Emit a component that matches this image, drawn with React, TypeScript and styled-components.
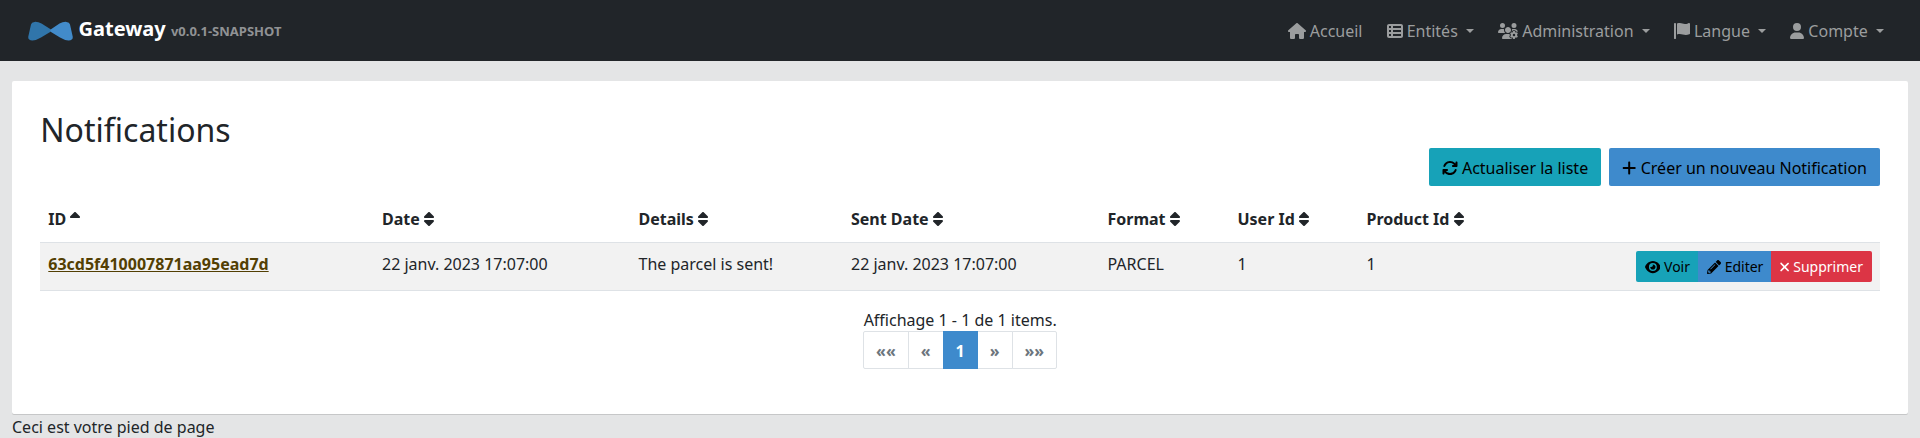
import React from "react";
import styled, { createGlobalStyle, css } from "styled-components";
import {
  FaArrowsRotate, FaEye, FaHouse, FaPlus, FaSort, FaSortUp,
  FaTableList, FaUser, FaUsersGear,
} from "react-icons/fa6";
import { FaPencilAlt } from "react-icons/fa";

const GlobalStyle = createGlobalStyle`
  *, *::before, *::after { box-sizing: border-box; }
  body {
    margin: 0;
    background: #e4e5e6;
    color: #212529;
    font: 400 16px/1.5 "Noto Sans", "Liberation Sans", sans-serif;
    overflow: hidden;
  }
`;

/* Icon box: 1em high, with the width of the glyph's own view box in em. */
const Icon = styled.span<{ $w?: number }>`
  display: inline-block;
  flex: none;
  width: ${(p) => p.$w ?? 1}em;
  height: 1em;
  line-height: 1;
  vertical-align: -0.125em;
  svg { display: block; width: 100%; height: 100%; }
`;

const Navbar = styled.nav`
  display: flex;
  align-items: center;
  justify-content: space-between;
  height: 61px;
  padding: 0 28px;
  background: #212529;
`;

const Brand = styled.a`
  display: flex;
  align-items: center;
  color: #fff;
`;

const Logo = styled.svg`
  width: 45px;
  height: 20px;
  margin-right: 5.5px;
`;

const BrandTitle = styled.span`
  font-size: 20px;
  font-weight: 700;
  line-height: 30px;
  padding-bottom: 1px;
`;

const Version = styled.span`
  color: #909294;
  font-size: 13px;
`;

const NavList = styled.ul`
  display: flex;
  gap: 8px;
  margin: 0;
  padding: 0;
  list-style: none;
`;

const NavLink = styled.a`
  display: flex;
  align-items: center;
  gap: 4.16px;
  padding: 8px;
  color: #9b9d9e;
  white-space: nowrap;
`;

const Caret = styled.span`
  margin-left: 4.08px;
  border: 4.8px solid transparent;
  border-top-color: currentColor;
  border-bottom: 0;
`;

const Card = styled.main`
  margin: 20.25px 12px 0;
  padding: 28.8px 28px 28.8px 28.3px;
  height: 333px;
  border-radius: 2px;
  background: #fff;
  box-shadow: 0 1px 0 #c6c7c8;
`;

const Title = styled.h2`
  margin: 0;
  height: 38.4px;
  font-size: 32px;
  font-weight: 400;
  line-height: 39.8px;
`;

const Actions = styled.div`
  display: flex;
  justify-content: flex-end;
  gap: 8px;
  margin-bottom: 16px;
`;

const tones = {
  info: css`background: #17a2b8; color: #000;`,
  primary: css`background: #3e8acc; color: #000;`,
  danger: css`background: #dc3545; color: #fff;`,
};

const Button = styled.button<{ $tone: keyof typeof tones; $small?: boolean }>`
  ${(p) => tones[p.$tone]}
  border: 0;
  border-radius: 2px;
  padding: ${(p) => (p.$small ? "5px 9px" : "7.6px 13px 6.4px")};
  font: inherit;
  font-size: ${(p) => (p.$small ? "14px" : "16px")};
  line-height: ${(p) => (p.$small ? "21px" : "24px")};
  white-space: nowrap;
`;

const ButtonGroup = styled.div`
  display: inline-flex;
  vertical-align: middle;
  ${Button} { border-radius: 0; }
  ${Button} + ${Button} { margin-left: -1px; }
  ${Button}:first-child { border-radius: 2px 0 0 2px; }
  ${Button}:last-child { border-radius: 0 2px 2px 0; }
`;

const Table = styled.table`
  width: 100%;
  margin-bottom: 16.6px;
  border-collapse: collapse;
`;

const HeadCell = styled.th`
  padding: 4.8px 8px 11.2px;
  border-bottom: 1px solid #dee2e6;
  text-align: left;
  font-weight: 700;
  white-space: nowrap;
`;

const Cell = styled.td<{ $right?: boolean }>`
  padding: ${(p) => (p.$right ? "8px" : "9px 8px 7px")};
  border-bottom: 1px solid #dee2e6;
  background: #f2f2f2;
  text-align: ${(p) => (p.$right ? "right" : "left")};
  vertical-align: top;
`;

const IdLink = styled.a`
  color: #533f03;
  font-weight: 700;
  text-decoration: underline;
`;

const Pager = styled.div`
  display: flex;
  flex-direction: column;
  align-items: center;
`;

const Summary = styled.div`
  height: 23.4px;
`;

const Pages = styled.ul`
  display: flex;
  margin: 0;
  padding: 0;
  list-style: none;
`;

const Page = styled.li<{ $active?: boolean }>`
  padding: 6.6px 12px 5.4px;
  border: 1px solid ${(p) => (p.$active ? "#3e8acc" : "#dee2e6")};
  background: ${(p) => (p.$active ? "#3e8acc" : "#fff")};
  color: ${(p) => (p.$active ? "#fff" : "#6c757d")};
  font-weight: 700;
  z-index: ${(p) => (p.$active ? 1 : 0)};
  & + & { margin-left: -1px; }
  &:first-child { border-radius: 2px 0 0 2px; }
  &:last-child { border-radius: 0 2px 2px 0; }
`;

const Footer = styled.footer`
  padding: 0.4px 12px 0;
`;

const Flag = () => (
  <svg viewBox="0 0 512 512" fill="currentColor">
    <path d="M64 496C64 504.8 56.75 512 48 512h-32C7.25 512 0 504.8 0 496V32c0-17.75 14.25-32 32-32s32 14.25 32 32V496zM476.3 0c-6.365 0-13.01 1.35-19.34 4.233c-45.69 20.86-79.56 27.94-107.8 27.94c-59.96 0-94.81-31.86-163.9-31.87C160.9 .3055 131.6 4.867 96 15.75v350.5c32-9.984 59.87-14.1 84.85-14.1c73.63 0 124.9 31.78 198.6 31.78c31.91 0 68.02-5.971 111.1-23.09C504.1 355.9 512 344.4 512 332.1V30.73C512 11.1 495.3 0 476.3 0z" />
  </svg>
);

const Cross = () => (
  <svg viewBox="0 0 320 512" fill="currentColor">
    <path d="M310.6 361.4c12.5 12.5 12.5 32.75 0 45.25C304.4 412.9 296.2 416 288 416s-16.38-3.125-22.62-9.375L160 301.3L54.63 406.6C48.38 412.9 40.19 416 32 416S15.63 412.9 9.375 406.6c-12.5-12.5-12.5-32.75 0-45.25l105.4-105.4L9.375 150.6c-12.5-12.5-12.5-32.75 0-45.25s32.75-12.5 45.25 0L160 210.8l105.4-105.4c12.5-12.5 32.75-12.5 45.25 0s12.5 32.75 0 45.25l-105.4 105.4L310.6 361.4z" />
  </svg>
);

const menu = [
  { icon: FaHouse, w: 1.125, label: "Accueil", dropdown: false },
  { icon: FaTableList, w: 1, label: "Entités", dropdown: true },
  { icon: FaUsersGear, w: 1.25, label: "Administration", dropdown: true },
  { icon: Flag, w: 1, label: "Langue", dropdown: true },
  { icon: FaUser, w: 0.875, label: "Compte", dropdown: true },
];

const columns = [
  { label: "ID", width: 333.7 },
  { label: "Date", width: 256.5 },
  { label: "Details", width: 212.5 },
  { label: "Sent Date", width: 256.5 },
  { label: "Format", width: 130 },
  { label: "User Id", width: 129 },
  { label: "Product Id", width: 0 },
];

export default function App() {
  return (
    <>
      <GlobalStyle />
      <Navbar>
        <Brand>
          <Logo viewBox="0 0 45 20">
            <path d="M3 3.500Q3.500 1 6.500.9 10 .6 13.500 2.600L23 8.600V10.600L13 16.600Q8.500 19.400 4.500 19.500-.3 19.600.3 15.500Z" fill="#3075aa" />
            <path d="M42 3.500Q41.500 1 38.500.9 35 .6 31.500 2.600L23 8.200 22 9.600 23 11 32 16.600Q36.500 19.400 40.500 19.500 45.300 19.600 44.700 15.500Z" fill="#428bca" />
          </Logo>
          <BrandTitle>Gateway <Version>v0.0.1-SNAPSHOT</Version></BrandTitle>
        </Brand>
        <NavList>
          {menu.map(({ icon: Glyph, w, label, dropdown }) => (
            <li key={label}>
              <NavLink>
                <Icon $w={w}><Glyph /></Icon>
                <span>{label}</span>
                {dropdown && <Caret />}
              </NavLink>
            </li>
          ))}
        </NavList>
      </Navbar>
      <Card>
        <Title>Notifications</Title>
        <Actions>
          <Button $tone="info"><Icon><FaArrowsRotate /></Icon> Actualiser la liste</Button>
          <Button $tone="primary"><Icon $w={0.9}><FaPlus /></Icon> Créer un nouveau Notification</Button>
        </Actions>
        <Table>
          <colgroup>
            {columns.map((c) => <col key={c.label} width={c.width || undefined} />)}
            <col />
          </colgroup>
          <thead>
            <tr>
              {columns.map((c, i) => (
                <HeadCell key={c.label}>
                  {c.label} <Icon $w={0.625}>{i === 0 ? <FaSortUp /> : <FaSort />}</Icon>
                </HeadCell>
              ))}
              <HeadCell />
            </tr>
          </thead>
          <tbody>
            <tr>
              <Cell><IdLink>63cd5f410007871aa95ead7d</IdLink></Cell>
              <Cell>22 janv. 2023 17:07:00</Cell>
              <Cell>The parcel is sent!</Cell>
              <Cell>22 janv. 2023 17:07:00</Cell>
              <Cell>PARCEL</Cell>
              <Cell>1</Cell>
              <Cell>1</Cell>
              <Cell $right>
                <ButtonGroup>
                  <Button $tone="info" $small><Icon $w={1.125}><FaEye /></Icon> Voir</Button>
                  <Button $tone="primary" $small><Icon><FaPencilAlt /></Icon> Editer</Button>
                  <Button $tone="danger" $small><Icon $w={0.66}><Cross /></Icon> Supprimer</Button>
                </ButtonGroup>
              </Cell>
            </tr>
          </tbody>
        </Table>
        <Pager>
          <Summary>Affichage 1 - 1 de 1 items.</Summary>
          <Pages>
            <Page>««</Page>
            <Page>«</Page>
            <Page $active>1</Page>
            <Page>»</Page>
            <Page>»»</Page>
          </Pages>
        </Pager>
      </Card>
      <Footer>Ceci est votre pied de page</Footer>
    </>
  );
}
